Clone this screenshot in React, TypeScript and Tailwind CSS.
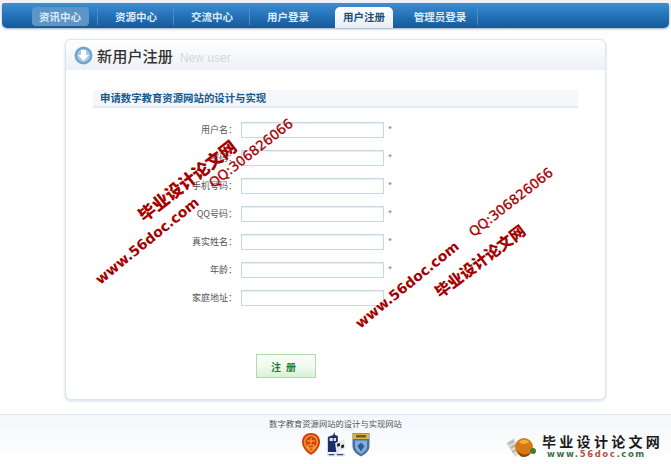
import React from "react";

const cjk = "font-['Noto_Sans_CJK_SC','Noto_Sans_CJK_JP',sans-serif]";

const navItems = ["资讯中心", "资源中心", "交流中心", "用户登录", "用户注册", "管理员登录"];
const fields = [
  { label: "用户名：", star: true },
  { label: "密码：", star: true },
  { label: "手机号码：", star: true },
  { label: "QQ号码：", star: true },
  { label: "真实姓名：", star: true },
  { label: "年龄：", star: true },
  { label: "家庭地址：", star: false },
];

function NavItem({ label, index }: { label: string; index: number }) {
  const active = index === 4;
  const first = index === 0;
  return (
    <div className="relative flex h-full w-[76px] items-end justify-center">
      {active ? (
        <div className="flex h-[21px] w-[58px] items-center justify-center rounded-t-[5px] bg-gradient-to-b from-[#ffffff] to-[#e6eef5] pb-[1px] text-[10.5px] font-bold text-[#1d4f7a]">
          {label}
        </div>
      ) : (
        <div
          className={`mb-[2px] flex h-[19px] w-[57px] items-center justify-center whitespace-nowrap rounded-[4px] text-[10.5px] font-bold text-[#dcebf7] ${
            first ? "bg-[#5c95c6]" : ""
          }`}
        >
          {label}
        </div>
      )}
      {!active && index !== 3 && (
        <span className="absolute right-0 top-[5px] h-[17px] w-px bg-[#4d8cc0]" />
      )}
    </div>
  );
}

function Emblems() {
  return (
    <div className="flex items-start justify-center gap-[5px]">
      <svg width="20" height="24" viewBox="0 0 20 24">
        <path d="M10 1C4 1 1 5 1 10c0 5 4 10 9 13 5-3 9-8 9-13C19 5 16 1 10 1z" fill="#d83a16" />
        <path d="M10 3C5.500 3 3 6 3 10c0 4 3 8 7 10.500 4-2.500 7-6.500 7-10.500C17 6 14.500 3 10 3z" fill="#e8a020" />
        <path d="M10 4.500c-3.500 0-5.500 2.500-5.500 5.500 0 3 2.500 6 5.500 8.500 3-2.500 5.500-5.500 5.500-8.500 0-3-2-5.500-5.500-5.500z" fill="#d83a16" />
        <path d="M6 9h8M10 6v6M7 13h6v3H7z" stroke="#f4c040" strokeWidth="1" fill="none" />
      </svg>
      <svg width="20" height="25" viewBox="0 0 22 25" preserveAspectRatio="none">
        <path d="M2 5l6-2 1-3 1 3 3 1v16H2z" fill="#1b2f66" />
        <path d="M4 6h3.500v3H4zM8.500 6H11v3H8.500z" fill="#cfe0f0" />
        <path d="M10 11l10-4 1.500 9-10 5z" fill="#e8e8e8" />
        <path d="M12 12l3-1.200.5 3-3 1.200zM16.500 13.500l3-1.200.5 3-3 1.200z" fill="#222" />
        <path d="M1 21h20v3.500H1z" fill="#dfe4f2" />
        <path d="M3 22.700h6M12 22.700h7" stroke="#3a4a90" strokeWidth="1.200" />
      </svg>
      <svg width="20" height="25" viewBox="0 0 20 25">
        <path d="M1.500 1h17v13c0 5-4 8-8.500 10.500C5.500 22 1.500 19 1.500 14z" fill="#4a6fa5" />
        <path d="M2 1.500h16v5.500H2z" fill="#d9b64a" />
        <path d="M5 3h10v2.500H5z" fill="#7a5a20" />
        <path d="M4 8.500h12v5.500c0 4-3 6-6 8-3-2-6-4-6-8z" fill="#7fb0d8" />
        <path d="M10 10.500l3.500 3.500-3.500 5.500L6.500 14z" fill="#2f5a96" />
      </svg>
    </div>
  );
}

function SiteLogo() {
  return (
    <div className="flex items-start">
      <svg width="34" height="26" viewBox="0 0 34 26" className="mr-[3px] mt-[1px]">
        <path d="M1 9l8-5 7 15-6 4z" fill="#dedcd8" />
        <path d="M3 9l5-3 1 2-5 3zM5 13l5-3 1 2-5 3zM7 17l4-2 1 2-4 2z" fill="#b8b4ae" />
        <circle cx="19" cy="13" r="9" fill="#d87a14" />
        <path d="M14 8c3-3 8-3 10 0-2 2-7 3-10 0z" fill="#f0b040" />
        <path d="M12 16c3 5 10 6 14 2-1 4-5 5-8 5-3 0-5-3-6-7z" fill="#8a4a10" />
        <circle cx="28" cy="17" r="3" fill="#4a7a2a" />
      </svg>
      <div className="flex flex-col items-start">
        <div className={`${cjk} whitespace-nowrap text-[14px] font-bold leading-[16px] tracking-[3.300px] text-[#1a1a1a]`}>
          毕业设计论文网
        </div>
        <div className="ml-[5px] whitespace-nowrap font-['DejaVu_Sans',sans-serif] text-[8.500px] font-bold leading-[11px] tracking-[1.600px] text-[#3c6e4a]">
          www.<span className="text-[#b5533a]">56doc</span>.com
        </div>
      </div>
    </div>
  );
}

function Watermark({ className, children }: { className: string; children: React.ReactNode }) {
  return (
    <div className={`pointer-events-none absolute origin-left whitespace-nowrap text-[#a50000] ${className}`}>
      {children}
    </div>
  );
}

const latinBold = "font-['DejaVu_Sans',sans-serif] font-bold text-[14px] leading-[18px]";
const latinReg = "font-['DejaVu_Sans',sans-serif] text-[13.400px] leading-[18px] [-webkit-text-stroke:0.3px_#a50000]";

export default function App() {
  return (
    <div className={`${cjk} relative flex h-[464px] w-[671px] flex-col overflow-hidden bg-white`}>
      <div className="bg-gradient-to-b from-[#edf3f8] to-[#ffffff] pt-[3px] pb-[11px]">
        <div className="mx-[2px] h-[25px] rounded-b-[5px] rounded-t-[2px] bg-gradient-to-b from-[#3f8fd0] via-[#2472b8] to-[#155a9c] pl-[20px] shadow-[0_1px_2px_rgba(20,60,110,0.4)]">
          <div className="flex h-full">
            {navItems.map((label, i) => (
              <NavItem key={label} label={label} index={i} />
            ))}
          </div>
        </div>
      </div>

      <main className="mx-[65px] flex h-[361px] flex-col rounded-[6px] border border-[#dbe5ee] bg-white shadow-[0_1px_3px_rgba(120,150,180,0.35)]">
        <div className="flex h-[30px] items-center rounded-t-[6px] bg-gradient-to-b from-[#ffffff] to-[#edf1f6] pl-[8px]">
          <svg width="19" height="19" viewBox="0 0 19 19">
            <circle cx="9.500" cy="9.500" r="9" fill="#74a3cf" />
            <circle cx="9.500" cy="9.500" r="6.500" fill="#a9c8e4" />
            <path d="M7 4h5v5h3l-5.500 6L4 9h3z" fill="#ffffff" />
          </svg>
          <span className="ml-[4px] text-[15.200px] font-medium leading-[20px] text-[#333333]">新用户注册</span>
          <span className="ml-[7px] mt-[5px] font-['Liberation_Sans',sans-serif] text-[12px] text-[#d4d8dc]">New user</span>
        </div>

        <div className="mx-[27px] mt-[20px] flex h-[18px] items-center border-b-2 border-[#e3ebf2] bg-[#f5f7fa] pl-[7px] text-[10.4px] font-bold text-[#165a8e]">
          申请数字教育资源网站的设计与实现
        </div>

        <form className="mt-[14px] flex flex-col gap-[12px]">
          {fields.map((f) => (
            <div key={f.label} className="flex h-[16px] items-center">
              <label className="w-[171px] text-right text-[9px] leading-[12px] text-[#555555]">{f.label}</label>
              <input
                type="text"
                className="ml-[4px] h-[16px] w-[143px] border border-[#c3d9e8] bg-white shadow-[inset_0_1px_1px_rgba(150,180,205,0.25)]"
              />
              {f.star && <span className="ml-[4px] text-[9px] leading-[10px] text-[#c0607a]">*</span>}
            </div>
          ))}
        </form>

        <button
          type="button"
          className="ml-[190px] mt-[48px] h-[24px] w-[60px] border border-[#b4d8b0] bg-gradient-to-b from-[#f8fcf8] via-[#f2faf0] to-[#d6f2d4] text-[10px] font-bold tracking-[5px] text-[#1d7a3a]"
        >
          注册
        </button>
      </main>

      <footer className="mt-[14px] flex flex-1 flex-col border-t border-[#dde8f0] bg-gradient-to-b from-[#f3f7fb] to-[#ffffff]">
        <div className="relative flex flex-col items-center pt-[2px]">
          <p className="text-[8.300px] leading-[12px] text-[#555555]">数字教育资源网站的设计与实现网站</p>
          <div className="mt-[3px]">
            <Emblems />
          </div>
          <div className="absolute left-[505px] top-[18px]">
            <SiteLogo />
          </div>
        </div>
      </footer>

      <Watermark className={`${cjk} left-[140px] top-[207px] rotate-[-38deg] text-[17px] font-black leading-[20px]`}>毕业设计论文网</Watermark>
      <Watermark className={`left-[97px] top-[272px] rotate-[-39deg] ${latinBold}`}>www.56doc.com</Watermark>
      <Watermark className={`left-[211px] top-[176px] rotate-[-38deg] ${latinReg}`}>QQ:306826066</Watermark>
      <Watermark className={`${cjk} left-[436px] top-[283px] rotate-[-37deg] text-[15.500px] font-black leading-[20px]`}>毕业设计论文网</Watermark>
      <Watermark className={`left-[357px] top-[316px] rotate-[-39deg] ${latinBold}`}>www.56doc.com</Watermark>
      <Watermark className={`left-[471px] top-[225px] rotate-[-38deg] ${latinReg}`}>QQ:306826066</Watermark>
    </div>
  );
}
